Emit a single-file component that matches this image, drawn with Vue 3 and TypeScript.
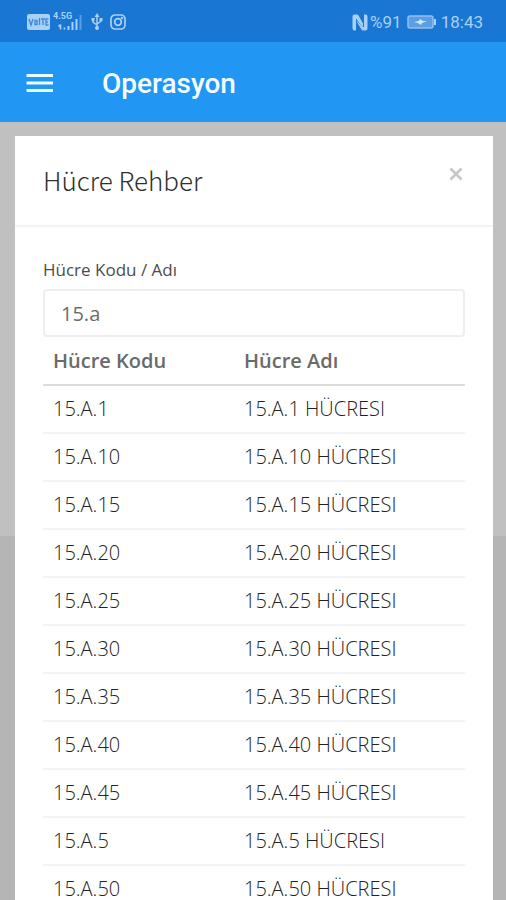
<script setup lang="ts">
import { computed, ref } from 'vue'

interface Cell {
  code: string
  name: string
}

const query = ref('15.a')

const cells: Cell[] = [1, 10, 15, 20, 25, 30, 35, 40, 45, 5, 50].map((n) => ({
  code: `15.A.${n}`,
  name: `15.A.${n} HÜCRESI`,
}))

const results = computed(() =>
  cells.filter((cell) => cell.code.toLowerCase().includes(query.value.toLowerCase())),
)
</script>

<template>
  <div class="screen">
    <div class="status">
      <div class="status-group">
        <svg class="volte" width="23" height="16" viewBox="0 0 23 16" aria-hidden="true">
          <rect width="23" height="16" rx="2" fill="#a9d0f5" />
          <path d="M2 5l2 6 2-6M8 6.500h2v4h-2zM12.500 4v7M14 5h4M16 5v6M21.500 5h-2.500v6h2.500M19 8h2" fill="none" stroke="#3f8bdb" stroke-width="1.400" />
        </svg>
        <div class="signal">
          <span class="network">4.5G</span>
          <svg width="30" height="18" viewBox="0 0 30 18" fill="none" aria-hidden="true">
            <path d="M7.500 11.500v5M5.500 13.500l2-2M11.500 16.500v-2" stroke="#a9d0f5" stroke-width="1.700" />
            <path d="M15.500 17v-4M19.500 17V9M23.500 17V6" stroke="#a9d0f5" stroke-width="2" />
            <path d="M27.500 17V2" stroke="#5b9fe2" stroke-width="2" />
          </svg>
        </div>
        <svg class="usb" width="12" height="18" viewBox="0 0 12 18" fill="none" stroke="#a9d0f5" stroke-width="1.500" aria-hidden="true">
          <path d="M6 15V3M6 12L2 9V6M6 11l4-3V5" />
          <path d="M6 0l2.500 4h-5z" fill="#a9d0f5" stroke="none" />
          <circle cx="6" cy="15" r="2" fill="#a9d0f5" stroke="none" />
          <path d="M.5 5h3v3h-3zM8.500 5h3v3h-3z" fill="#a9d0f5" stroke="none" />
        </svg>
        <svg class="camera" width="16" height="16" viewBox="0 0 16 16" fill="none" stroke="#a9d0f5" stroke-width="1.700" aria-hidden="true">
          <rect x="1" y="1" width="14" height="14" rx="4" />
          <circle cx="8" cy="8" r="3.300" />
          <circle cx="12" cy="4" r=".5" />
        </svg>
      </div>
      <div class="status-group">
        <svg width="16" height="17" viewBox="0 0 16 17" aria-hidden="true">
          <path d="M5 .5H2.500Q.5.500.5 2.500v12q0 2 2 2H4V4.500l5 6.500q1 1.200 2 1V9.500L6.500 1.500Q6 .5 5 .5z" fill="#a9d0f5" />
          <path d="M12 .5h1.500q2 0 2 2v12q0 2-2 2H11q-1 0-1.500-1L5 8v-1l5 5q2 2 2 0z" fill="#a9d0f5" />
        </svg>
        <span class="percent">%91</span>
        <svg class="battery" width="30" height="14" viewBox="0 0 30 14" aria-hidden="true">
          <rect x="1" y="1" width="25" height="12" rx="2" fill="#5b9fe2" stroke="#8fc0f0" stroke-width="1.500" />
          <path d="M28 4v6" stroke="#a9d0f5" stroke-width="2" />
          <path d="M7 7l5-1 1-2 3 2h4l-5 2-1 2-3-2z" fill="#d4e8fb" />
        </svg>
        <span>18:43</span>
      </div>
    </div>

    <header class="appbar">
      <button class="menu" type="button" aria-label="Menü">
        <svg width="28" height="20" viewBox="0 0 28 20" aria-hidden="true">
          <path d="M.5 1.500h26.500M.5 9h26.500M.5 16.500h26.500" stroke="#e8fbff" stroke-width="3" />
        </svg>
      </button>
      <h1>Operasyon</h1>
    </header>

    <main class="backdrop">
      <section class="modal" role="dialog" aria-labelledby="dialog-title">
        <header class="modal-head">
          <h2 id="dialog-title">Hücre Rehber</h2>
          <button class="close" type="button" aria-label="Kapat">
            <svg width="14" height="14" viewBox="0 0 14 14" aria-hidden="true">
              <path d="M1.500 1.500l11 11M12.500 1.500l-11 11" stroke="#c6c6c6" stroke-width="2.500" />
            </svg>
          </button>
        </header>
        <div class="modal-body">
          <label for="query">Hücre Kodu / Adı</label>
          <input id="query" v-model="query" type="text" autocomplete="off" />
          <table>
            <thead>
              <tr>
                <th scope="col">Hücre Kodu</th>
                <th scope="col">Hücre Adı</th>
              </tr>
            </thead>
            <tbody>
              <tr v-for="cell in results" :key="cell.code">
                <td>{{ cell.code }}</td>
                <td>{{ cell.name }}</td>
              </tr>
            </tbody>
          </table>
        </div>
      </section>
    </main>
  </div>
</template>

<style>
body {
  margin: 0;
}
</style>

<style scoped>
.screen {
  display: flex;
  flex-direction: column;
  height: 100vh;
  overflow: hidden;
  font-family: "Open Sans", "Noto Sans", sans-serif;
  color: #222;
}

.status {
  display: flex;
  flex: none;
  align-items: center;
  justify-content: space-between;
  box-sizing: border-box;
  height: 42px;
  padding: 2px 23px 0 27px;
  background: #1976d2;
  color: #a9d0f5;
  font: 17px/20px Roboto, sans-serif;
}

.status-group {
  display: flex;
  align-items: center;
}

.signal {
  position: relative;
  height: 18px;
  margin-left: 3px;
}

.network {
  position: absolute;
  top: -2px;
  left: 0;
  font: bold 9px/10px Roboto, sans-serif;
}

.usb {
  margin-left: 8px;
}

.camera {
  margin-left: 7px;
}

.percent {
  margin-left: 2px;
}

.battery {
  margin: 0 4px 0 5px;
}

.appbar {
  display: flex;
  flex: none;
  align-items: center;
  gap: 48px;
  box-sizing: border-box;
  height: 80px;
  padding: 3px 26px 0;
  background: #2196f3;
}

.menu,
.close {
  display: flex;
  padding: 0;
  border: 0;
  background: none;
  cursor: pointer;
}

h1 {
  margin: 0;
  color: #f4fdff;
  font: 500 28px/36px Roboto, sans-serif;
}

.backdrop {
  display: flex;
  flex: 1;
  flex-direction: column;
  min-height: 0;
  padding: 14px 13px 0 15px;
  background: linear-gradient(#c0c0c0 414px, #b5b5b5 414px);
}

.modal {
  flex: none;
  background: #fff;
}

.modal-head {
  display: flex;
  align-items: flex-start;
  justify-content: space-between;
  padding: 26px 30px 27px 28px;
  border-bottom: 2px solid #f4f4f4;
}

h2 {
  margin: 0;
  color: #303030;
  font: 300 26px/36px "Noto Sans CJK JP", "Open Sans", sans-serif;
}

.close {
  margin-top: 5px;
}

.modal-body {
  padding: 31px 28px 0;
}

label {
  display: block;
  margin-bottom: 7px;
  color: #4c4c4c;
  font-size: 17px;
  font-weight: 500;
  line-height: 24px;
}

input {
  display: block;
  box-sizing: border-box;
  width: 100%;
  height: 48px;
  margin-bottom: 1px;
  padding: 0 16px;
  border: 2px solid #eee;
  border-radius: 4px;
  outline: 0;
  background: #fff;
  color: #6c6c6c;
  font: inherit;
  font-size: 20px;
}

table {
  width: 100%;
  border-collapse: separate;
  border-spacing: 0;
  table-layout: fixed;
  font-size: 20px;
  line-height: 26px;
  text-align: left;
}

th {
  padding: 10px;
  border-bottom: 2px solid #dcdcdc;
  color: #6a6a6a;
  font-weight: 600;
}

th:first-child {
  width: 171px;
}

td {
  padding: 10px;
  border-bottom: 2px solid #f4f4f4;
  font-weight: 300;
}
</style>
